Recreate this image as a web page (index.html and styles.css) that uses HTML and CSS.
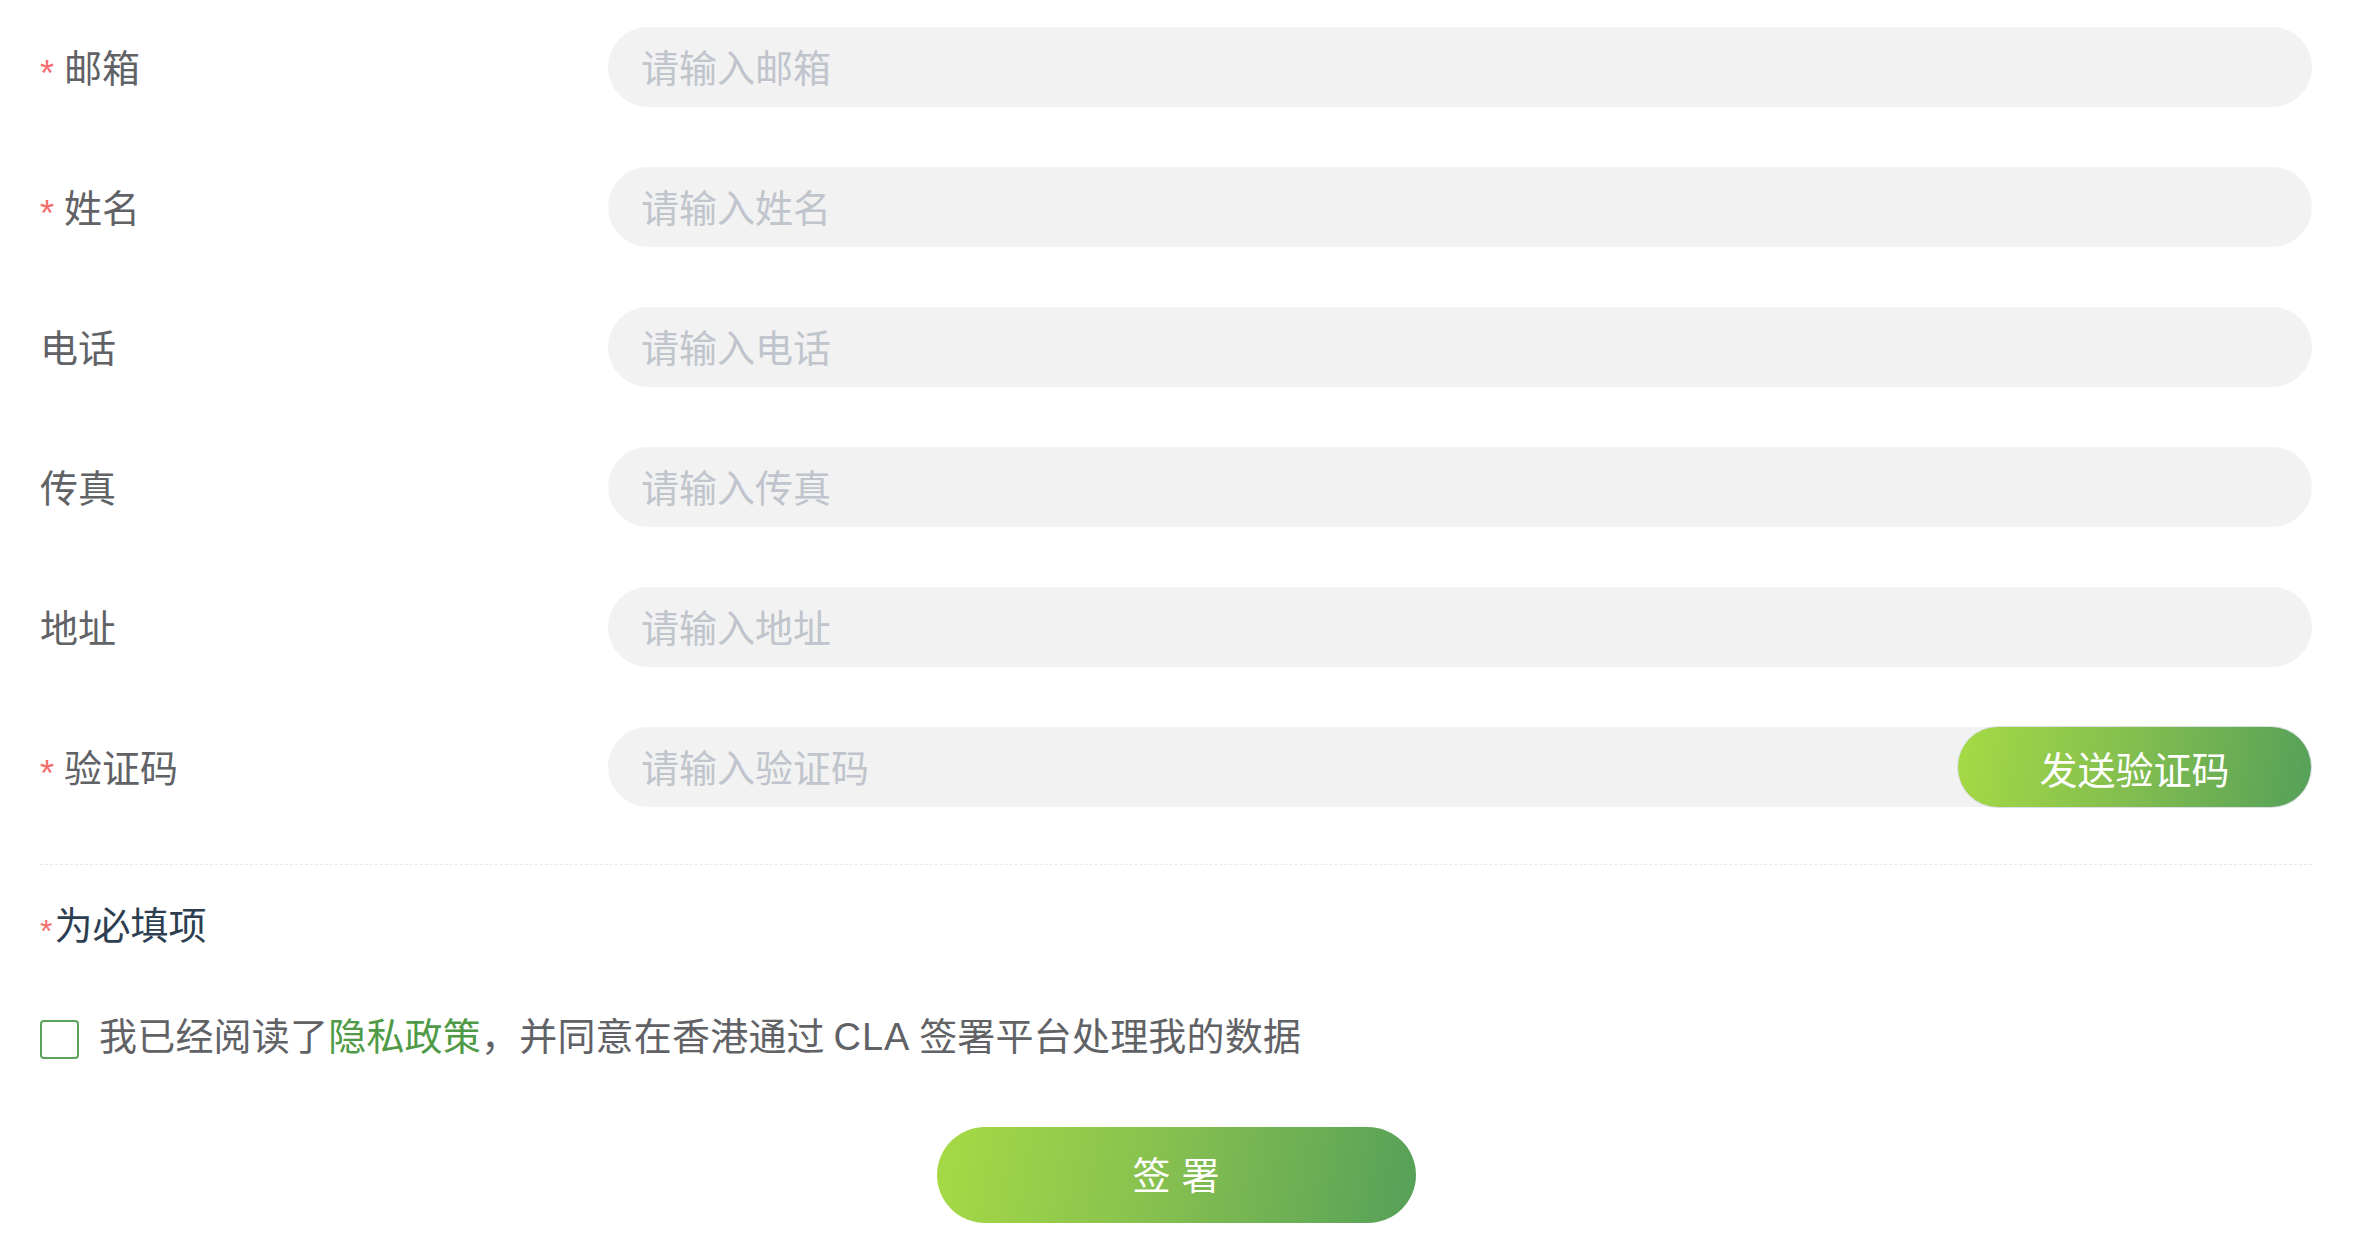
FILE: index.html
```html
<!DOCTYPE html>
<html lang="zh-CN">
<head>
<meta charset="utf-8">
<title>CLA 签署</title>
<link rel="stylesheet" href="styles.css">
</head>
<body>
<div class="form">
  <div class="form-item">
    <label class="label"><span class="req">*</span>邮箱</label>
    <div class="input"><span class="ph">请输入邮箱</span></div>
  </div>
  <div class="form-item">
    <label class="label"><span class="req">*</span>姓名</label>
    <div class="input"><span class="ph">请输入姓名</span></div>
  </div>
  <div class="form-item">
    <label class="label">电话</label>
    <div class="input"><span class="ph">请输入电话</span></div>
  </div>
  <div class="form-item">
    <label class="label">传真</label>
    <div class="input"><span class="ph">请输入传真</span></div>
  </div>
  <div class="form-item">
    <label class="label">地址</label>
    <div class="input"><span class="ph">请输入地址</span></div>
  </div>
  <div class="form-item last">
    <label class="label"><span class="req">*</span>验证码</label>
    <div class="input with-btn"><span class="ph">请输入验证码</span><button class="send-btn">发送验证码</button></div>
  </div>

  <div class="divider"></div>

  <div class="required-note"><span class="req-small">*</span>为必填项</div>

  <div class="agree">
    <span class="checkbox"></span>
    <span class="agree-text">我已经阅读了<a class="link">隐私政策</a>，并同意在香港通过 <span class="latin">CLA</span> 签署平台处理我的数据</span>
  </div>

  <div class="submit-row">
    <button class="sign-btn">签署</button>
  </div>
</div>
</body>
</html>
```
FILE: styles.css
```css
html, body {
  margin: 0;
  padding: 0;
  background: #ffffff;
}

body {
  font-family: "Noto Sans CJK SC", "Noto Sans", "Liberation Sans", sans-serif;
}

.form {
  padding: 27px 47px 0 40px;
}

.form-item {
  display: flex;
  align-items: center;
  height: 80px;
  margin-bottom: 60px;
}

.form-item.last {
  margin-bottom: 0;
}

.label {
  width: 568px;
  flex: none;
  display: flex;
  align-items: center;
  font-size: 38px;
  line-height: 1;
  color: #606266;
  padding-bottom: 3px;
}

.req {
  color: #f56c6c;
  font-family: "Liberation Sans", sans-serif;
  font-size: 36px;
  line-height: 1;
  margin-right: 10px;
  transform: translateY(8px);
}

.input {
  flex: 1;
  height: 80px;
  border-radius: 40px;
  background: #f2f2f2;
  display: flex;
  align-items: center;
  padding-left: 33px;
  box-sizing: border-box;
}

.ph {
  font-size: 38px;
  line-height: 1;
  color: #c0c4cc;
  padding-bottom: 3px;
}

.with-btn .ph {
  flex: 1;
}

.send-btn {
  width: 355px;
  height: 82px;
  flex: none;
  border: 1px solid #dcdfe6;
  border-radius: 41px;
  background: linear-gradient(100deg, #a6da45 0%, #86c04e 45%, #55a059 100%);
  color: #ffffff;
  font-family: inherit;
  font-size: 38px;
  line-height: 1;
  padding: 2px 0 0;
  box-sizing: border-box;
}

.divider {
  margin-top: 57px;
  border-top: 1px dashed #e9e9e9;
}

.required-note {
  margin-top: 34px;
  height: 50px;
  display: flex;
  align-items: center;
  font-size: 38px;
  line-height: 1;
  color: #2c3e50;
  padding-bottom: 3px;
  box-sizing: border-box;
}

.req-small {
  color: #f56c6c;
  font-family: "Liberation Sans", sans-serif;
  font-size: 32px;
  line-height: 1;
  margin-right: 2px;
  transform: translateY(8px);
}

.agree {
  margin-top: 63px;
  height: 50px;
  display: flex;
  align-items: center;
}

.checkbox {
  width: 39px;
  height: 39px;
  box-sizing: border-box;
  border: 2px solid #5ba35a;
  border-radius: 4px;
  flex: none;
  margin-right: 20px;
  transform: translateY(2px);
}

.agree-text {
  font-size: 38px;
  line-height: 1;
  color: #606266;
  padding-bottom: 3px;
  letter-spacing: 0.2px;
}

.latin {
  font-family: "Liberation Sans", sans-serif;
  font-weight: 300;
  letter-spacing: 1px;
}

.link {
  color: #4f9a46;
  text-decoration: none;
}

.submit-row {
  display: flex;
  justify-content: center;
  margin-top: 65px;
}

.sign-btn {
  width: 479px;
  height: 96px;
  border: none;
  border-radius: 48px;
  background: linear-gradient(100deg, #a6da45 0%, #88c14f 45%, #55a059 100%);
  color: #ffffff;
  font-family: inherit;
  font-size: 38px;
  line-height: 1;
  letter-spacing: 11px;
  padding: 0 0 5px 11px;
}
```
